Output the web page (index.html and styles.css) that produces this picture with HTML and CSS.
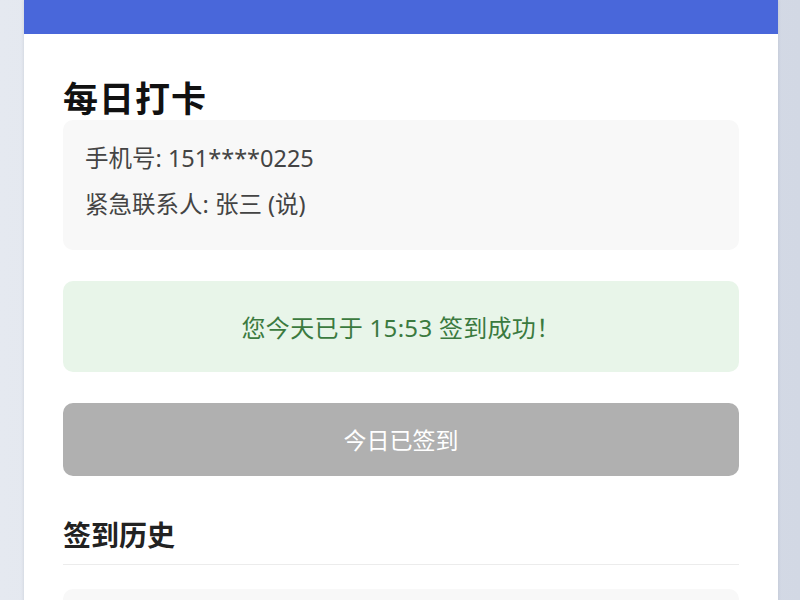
FILE: index.html
```html
<!DOCTYPE html>
<html lang="zh-CN">
<head>
<meta charset="utf-8">
<title>每日打卡</title>
<link rel="stylesheet" href="styles.css">
</head>
<body>
<div class="page">
  <div class="card">
    <div class="topbar"></div>
    <div class="content">
      <h1 class="title">每日打卡</h1>
      <div class="info">
        <p class="info-line">手机号: 151****0225</p>
        <p class="info-line">紧急联系人: 张三 (说)</p>
      </div>
      <div class="notice">您今天已于 15:53 签到成功！</div>
      <button class="checkin-btn" type="button" disabled>今日已签到</button>
      <h2 class="section-title">签到历史</h2>
      <div class="history"></div>
    </div>
  </div>
</div>
</body>
</html>
```
FILE: styles.css
```css
html, body {
  margin: 0;
  padding: 0;
  height: 100%;
  overflow: hidden;
}
body {
  font-family: "Noto Sans", "Noto Sans CJK SC", sans-serif;
  background: linear-gradient(90deg, #e5e9f0 0%, #dde2eb 50%, #d2d8e4 100%);
}
.page {
  display: flex;
  justify-content: center;
  padding-left: 2px;
}
.card {
  width: 754px;
  background: #ffffff;
  min-height: 600px;
  box-shadow: 0 0 3px rgba(120, 130, 150, 0.25);
}
.topbar {
  height: 34px;
  background: #4967da;
}
.content {
  padding: 0 39px;
}
.title {
  margin: 41px 0 1px;
  font-family: "Noto Sans CJK SC", sans-serif;
  font-size: 35px;
  line-height: 44px;
  font-weight: 700;
  color: #111;
  letter-spacing: 1px;
}
.info {
  background: #f8f8f8;
  border-radius: 10px;
  padding: 20px 22px 18px;
}
.info-line {
  margin: 0 0 10px;
  font-size: 23.5px;
  line-height: 36px;
  color: #444;
}
.notice {
  margin-top: 31px;
  background: #e8f5e9;
  border-radius: 10px;
  padding: 31px 20px 29px;
  text-align: center;
  font-size: 24px;
  line-height: 31px;
  letter-spacing: 0.3px;
  color: #3b7a3f;
}
.checkin-btn {
  display: block;
  width: 100%;
  margin-top: 31px;
  border: none;
  border-radius: 10px;
  background: #b0b0b0;
  color: #fff;
  font-family: inherit;
  font-size: 23px;
  line-height: 33px;
  padding: 21px 0 19px;
}
.section-title {
  margin: 40px 0 0;
  padding-bottom: 12px;
  border-bottom: 1px solid #ececec;
  font-family: "Noto Sans CJK SC", sans-serif;
  font-size: 28px;
  line-height: 36px;
  font-weight: 700;
  color: #222;
}
.history {
  margin-top: 24px;
  height: 80px;
  background: #f8f8f8;
  border-radius: 10px;
}
```
